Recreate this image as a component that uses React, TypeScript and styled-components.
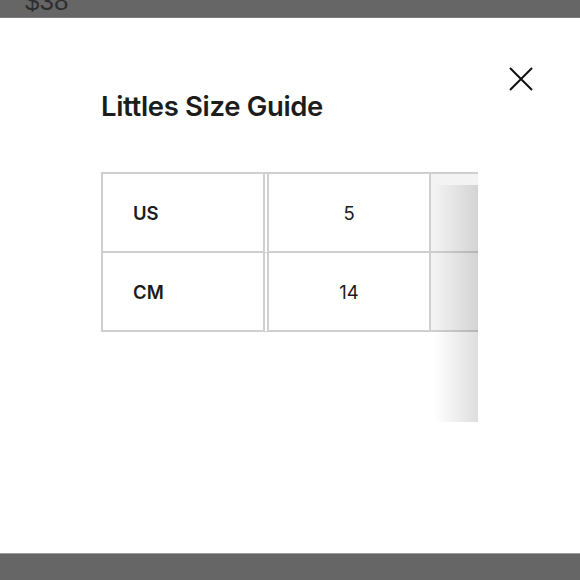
import React from "react";
import styled, { createGlobalStyle } from "styled-components";

const Global = createGlobalStyle`
  html, body {
    margin: 0;
    padding: 0;
    background: #666666;
    font-family: Inter, "Noto Sans", sans-serif;
  }
`;

const Page = styled.div`
  width: 580px;
  height: 580px;
  display: flex;
  flex-direction: column;
  overflow: hidden;
`;

const TopStrip = styled.div`
  height: 18px;
  flex: none;
  background: #666666;
  border-bottom: 1px solid #7a7a7a;
  box-sizing: border-box;
  overflow: hidden;
  padding-left: 25px;
`;

const Price = styled.span`
  display: block;
  margin-top: -14px;
  font-family: "Liberation Sans", Arial, sans-serif;
  font-size: 26px;
  line-height: 30px;
  color: #2e2e2e;
`;

const Modal = styled.div`
  flex: 1;
  position: relative;
  background: #ffffff;
  padding: 70px 0 0 101px;
`;

const Title = styled.h2`
  margin: 0;
  font-family: Inter, sans-serif;
  font-weight: 600;
  font-size: 27.5px;
  line-height: 36px;
  letter-spacing: -0.35px;
  color: #1c1c1c;
`;

const CloseButton = styled.button`
  position: absolute;
  top: 48px;
  right: 46px;
  width: 26px;
  height: 26px;
  padding: 0;
  border: none;
  background: none;
  cursor: pointer;
  display: flex;
  align-items: center;
  justify-content: center;
`;

const ScrollArea = styled.div`
  position: relative;
  margin-top: 48px;
  width: 377px;
  height: 252px;
  overflow: hidden;
`;

const Table = styled.table`
  table-layout: fixed;
  width: 492px;
  border-collapse: separate;
  border-spacing: 0;
  border-top: 2px solid #cfcfcf;
  border-left: 2px solid #cfcfcf;
`;

const Col = styled.col<{ $w: number }>`
  width: ${(p) => p.$w}px;
`;

const Cell = styled.td<{ $head?: boolean; $filler?: boolean }>`
  height: 79px;
  padding: 0;
  border-bottom: 2px solid #cfcfcf;
  border-right: ${(p) => (p.$head ? "6px double #cfcfcf" : "2px solid #cfcfcf")};
  box-sizing: border-box;
  padding-left: ${(p) => (p.$head ? "30px" : "0")};
  text-align: ${(p) => (p.$head ? "left" : "center")};
  font-size: 18.5px;
  font-weight: ${(p) => (p.$head ? 600 : 400)};
  color: #1c1c1c;
  background: ${(p) => (p.$filler ? "#f3f3f3" : "#ffffff")};
`;

const Fade = styled.div`
  position: absolute;
  top: 13px;
  right: 0;
  width: 44px;
  height: 237px;
  background: linear-gradient(to right, rgba(0, 0, 0, 0), rgba(0, 0, 0, 0.13));
  pointer-events: none;
`;

const BottomStrip = styled.div`
  height: 27px;
  flex: none;
  background: #666666;
  border-top: 1px solid #9a9a9a;
  box-sizing: border-box;
`;

const rows = [
  { label: "US", values: ["5", "6"] },
  { label: "CM", values: ["14", "15"] },
];

export default function App() {
  return (
    <Page>
      <Global />
      <TopStrip>
        <Price>$38</Price>
      </TopStrip>
      <Modal>
        <Title>Littles Size Guide</Title>
        <CloseButton aria-label="Close">
          <svg width="24" height="24" viewBox="0 0 24 24">
            <path d="M1 1 L23 23 M23 1 L1 23" stroke="#111" strokeWidth="2" fill="none" />
          </svg>
        </CloseButton>
        <ScrollArea>
          <Table>
            <colgroup>
              <Col $w={166} />
              <Col $w={162} />
              <Col $w={162} />
            </colgroup>
            <tbody>
              {rows.map((r) => (
                <tr key={r.label}>
                  <Cell $head>{r.label}</Cell>
                  <Cell>{r.values[0]}</Cell>
                  <Cell $filler />
                </tr>
              ))}
            </tbody>
          </Table>
          <Fade />
        </ScrollArea>
      </Modal>
      <BottomStrip />
    </Page>
  );
}
